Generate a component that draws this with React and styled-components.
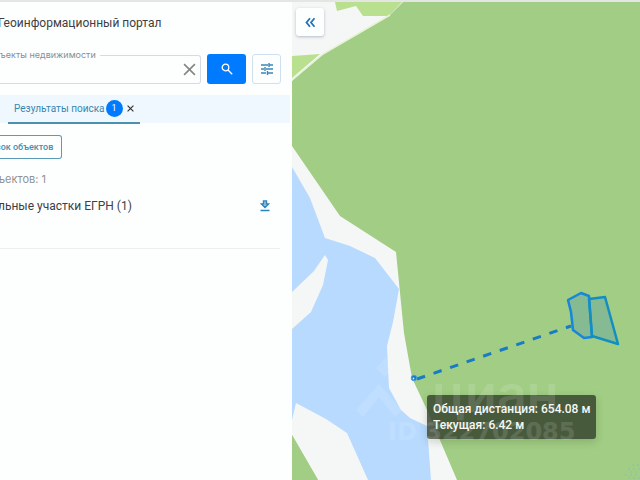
import React from "react";
import styled, { createGlobalStyle } from "styled-components";

const GlobalStyle = createGlobalStyle`
  * { box-sizing: border-box; }
  body { margin: 0; background: #fdfffe; }
  button, input { font-family: inherit; margin: 0; }
`;

const Page = styled.div`
  display: flex;
  min-height: 100vh;
  overflow: hidden;
  border-top: 2px solid #e4e6e4;
  font-family: Roboto, Inter, "Liberation Sans", sans-serif;
  color: #3d4043;
`;

const Panel = styled.aside`
  flex: 0 0 292px;
  background: #fdfffe;
  overflow: hidden;
`;

const Title = styled.h1`
  margin: 0 0 0 -2px;
  padding-top: 13px;
  font-size: 12px;
  line-height: 16px;
  font-weight: 400;
  white-space: nowrap;
`;

const SearchForm = styled.form`
  display: flex;
  align-items: flex-end;
  gap: 6px;
  padding: 18px 11px 0 0;
`;

const Field = styled.fieldset`
  flex: 1;
  min-width: 0;
  height: 35px;
  margin: 0;
  padding: 0 4px 0 0;
  border: 1px solid #d3dce6;
  border-left: 0;
  border-radius: 0 3px 3px 0;
`;

const Legend = styled.legend`
  padding: 0 4px 0 0;
  font-family: Inter, sans-serif;
  font-size: 9px;
  line-height: 12px;
  color: #8b8e90;
  white-space: nowrap;
`;

const FieldRow = styled.div`
  display: flex;
  align-items: center;
  height: 17px;
`;

const Input = styled.input`
  flex: 1;
  min-width: 0;
  border: 0;
  outline: 0;
  background: transparent;
  font-size: 12px;
`;

const IconButton = styled.button`
  display: flex;
  align-items: center;
  justify-content: center;
  flex: none;
  padding: 0;
  border: 0;
  background: transparent;
  color: ${(p) => p.$color || "#333"};
`;

const SearchButton = styled(IconButton)`
  width: 39px;
  height: 30px;
  border-radius: 3px;
  background: #007bff;
  color: #fff;
`;

const FilterButton = styled(IconButton)`
  width: 29px;
  height: 30px;
  border: 1px solid #cfe0f0;
  border-radius: 3px;
  background: #fdfffe;
  color: #3a87b8;
`;

const TabBar = styled.nav`
  display: flex;
  height: 28px;
  margin: 11px 2px 0 0;
  padding-left: 8px;
  background: #f0f8ff;
`;

const Tab = styled.div`
  display: flex;
  align-items: center;
  gap: 4px;
  padding: 0 6px;
  height: 29px;
  border-bottom: 2px solid #4a92b0;
`;

const TabButton = styled.button`
  display: flex;
  align-items: center;
  gap: 1px;
  padding: 0;
  border: 0;
  background: transparent;
  font-size: 10px;
  line-height: 16px;
  color: #3787ad;
  white-space: nowrap;
`;

const Badge = styled.span`
  width: 17px;
  height: 17px;
  border-radius: 50%;
  background: #007bff;
  color: #fff;
  font-size: 9px;
  line-height: 17px;
  text-align: center;
`;

const ListButton = styled.button`
  display: block;
  height: 24px;
  margin: 12px 0 0 -4px;
  padding: 0 8px 0 0;
  border: 1px solid #5a9cb8;
  border-left: 0;
  border-radius: 0 3px 3px 0;
  background: #fdfffe;
  font-size: 9px;
  font-weight: 500;
  line-height: 12px;
  color: #4590b2;
  white-space: nowrap;
`;

const Count = styled.p`
  margin: 12px 0 0 -2px;
  font-family: Inter, sans-serif;
  font-size: 11px;
  line-height: 16px;
  color: #909294;
`;

const ResultRow = styled.div`
  display: flex;
  align-items: center;
  justify-content: space-between;
  height: 62px;
  margin: 0 12px 0 -2px;
  padding: 0 10px 24px 0;
  border-bottom: 1px solid #eeefee;
`;

const ResultName = styled.span`
  font-size: 12px;
  line-height: 16px;
  white-space: nowrap;
`;

const MapArea = styled.main`
  position: relative;
  flex: 1;
  min-width: 0;
  background: #a1cd84;
  overflow: hidden;
`;

const MapDrawing = styled.svg`
  position: absolute;
  inset: 0;
  width: 100%;
  height: 100%;
`;

const CollapseButton = styled(IconButton)`
  position: absolute;
  left: 4px;
  top: 6px;
  width: 28px;
  height: 28px;
  border-radius: 3px;
  background: #fdfffe;
  box-shadow: 0 1px 3px rgba(60, 80, 110, 0.35);
`;

const DistanceTip = styled.div`
  position: absolute;
  left: 135px;
  top: 393px;
  padding: 6px 6px;
  border-radius: 3px;
  background: rgba(55, 68, 46, 0.84);
  box-shadow: 0 3px 8px rgba(40, 60, 30, 0.2);
  color: #f6f8f4;
  font-size: 12px;
  font-weight: 500;
  line-height: 16px;
  white-space: nowrap;
`;

const Watermark = styled.div`
  position: absolute;
  left: 64px;
  top: 352px;
  display: grid;
  color: #fff;
  opacity: 0.12;
  font-family: "Open Sans", sans-serif;
  font-weight: 700;
  pointer-events: none;
`;

const WatermarkBrand = styled.div`
  display: flex;
  gap: 30px;
  height: 66px;
  font-family: Inter, sans-serif;
  font-weight: 600;
  font-size: 52px;
  line-height: 80px;
`;

const WatermarkId = styled.div`
  padding-left: 32px;
  font-size: 24px;
  font-family: "DejaVu Sans", sans-serif;
  line-height: 24px;
  white-space: nowrap;
`;

const Cross = ({ size, width }) => (
  <svg width={size} height={size} viewBox="0 0 12 12" fill="none" stroke="currentColor" strokeWidth={width}>
    <path d="M1 1 11 11M11 1 1 11" />
  </svg>
);

export default function App() {
  return (
    <>
      <GlobalStyle />
      <Page>
        <Panel>
          <Title>Геоинформационный портал</Title>
          <SearchForm onSubmit={(e) => e.preventDefault()}>
            <Field>
              <Legend id="search-label">ъекты недвижимости</Legend>
              <FieldRow>
                <Input type="text" aria-labelledby="search-label" />
                <IconButton type="button" aria-label="Очистить" $color="#858585">
                  <Cross size={13} width={1.5} />
                </IconButton>
              </FieldRow>
            </Field>
            <SearchButton type="submit" aria-label="Найти">
              <svg width="12" height="12" viewBox="0 0 12 12" fill="none" stroke="currentColor" strokeWidth="1.3">
                <circle cx="4.5" cy="4.5" r="3.3" />
                <path d="m7 7 4.2 4.2" />
              </svg>
            </SearchButton>
            <FilterButton type="button" aria-label="Фильтры">
              <svg width="12" height="12" viewBox="0 0 12 12" fill="none" stroke="currentColor" strokeWidth="1.4">
                <path d="M0 2h7M8.500 2H12M8 0v4M0 6h3M5 6h7M4 4v4M0 10h5M7 10h5M6.500 8v4" />
              </svg>
            </FilterButton>
          </SearchForm>
          <TabBar>
            <Tab>
              <TabButton type="button">
                Результаты поиска <Badge>1</Badge>
              </TabButton>
              <IconButton type="button" aria-label="Закрыть">
                <Cross size={7} width={2} />
              </IconButton>
            </Tab>
          </TabBar>
          <ListButton type="button">сок объектов</ListButton>
          <Count>ъектов: 1</Count>
          <ResultRow>
            <ResultName>льные участки ЕГРН (1)</ResultName>
            <IconButton type="button" aria-label="Скачать" $color="#2c82bd">
              <svg width="10" height="12" viewBox="0 0 10 12" fill="none" stroke="currentColor">
                <path d="M3.500 1h3v3h2L5 7.500 1.500 4h2z" strokeWidth="1.4" />
                <path d="M5 2v4" />
                <path d="M.5 10.500h9" strokeWidth="1.500" />
              </svg>
            </IconButton>
          </ResultRow>
        </Panel>
        <MapArea>
          <MapDrawing viewBox="292 2 348 478" preserveAspectRatio="xMinYMin slice" aria-hidden="true">
            <path fill="#a1cd84" d="M292 2H640V480H292z" />
            <path fill="#f5f7f6" d="M292 2H403L389 16 322 55 292 81z" />
            <path fill="#b8e08f" d="M335 2H402L389 16 363 16 356 6 337 11z" />
            <path fill="#b8e08f" d="M292 56 320 54 292 78z" />
            <path fill="none" stroke="#e5f2d6" strokeWidth="1.5" d="M292 80 323 54 390 15" />
            <path fill="#f5f7f6" d="M292 146 340 216 396 252 404 333 412 378 428 412 457 480H318L292 435z" />
            <path
              fill="#b8daff"
              d="M292 167 310 198 325 238 350 246 375 258 399 289 393 322 387 346 389 388 401 410 410 418 427 426 431 480H368L347 433 326 419 296 403 292 420z"
            />
            <path fill="#f5f7f6" d="M292 292 314 271 325 255 328 260 323 285 311 312 292 329z" />
            <path fill="#a1cd84" d="M292 435 318 480H292z" />
            <g fill="rgba(78,145,180,.32)" stroke="#1687d9" strokeWidth="2.5" strokeLinejoin="round">
              <path d="m568 300 13-7 8 3 3 41-8 1-11-8-2-18z" />
              <path stroke="#128fc2" d="m589 299 16-2 13 47-26-8z" />
            </g>
            <path d="M417 379 571 326" stroke="#187cc5" strokeWidth="3" strokeDasharray="8.500 9" />
            <circle cx="414" cy="378" r="2.8" fill="#1879c4" stroke="#4b9fdf" />
            <circle cx="413.500" cy="378.500" r=".9" fill="#cfe9ff" />
            <path
              stroke="#8bc3a5"
              strokeDasharray="2 3"
              d="M632 465h8M628 469h12M630 472h10M625 475h15M628 478h12"
            />
          </MapDrawing>
          <CollapseButton type="button" aria-label="Свернуть панель" $color="#2273b5">
            <svg width="11" height="11" viewBox="0 0 11 11" fill="none" stroke="currentColor" strokeWidth="1.8">
              <path d="M5 1.200 1.500 5.500l3.500 4.300M9.500 1.200 6 5.500l3.500 4.300" />
            </svg>
          </CollapseButton>
          <DistanceTip role="tooltip">
            Общая дистанция: 654.08 м
            <br />
            Текущая: 6.42 м
          </DistanceTip>
          <Watermark>
            <WatermarkBrand>
              <svg width="46" height="66" viewBox="0 0 46 66" fill="currentColor" aria-hidden="true">
                <path d="M23 30 46 56l-7 7-16-20L7 63 0 56z" />
                <path d="m29 4 9 10-9 9-9-9z" />
              </svg>
              циан
            </WatermarkBrand>
            <WatermarkId>ID 322702085</WatermarkId>
          </Watermark>
        </MapArea>
      </Page>
    </>
  );
}
